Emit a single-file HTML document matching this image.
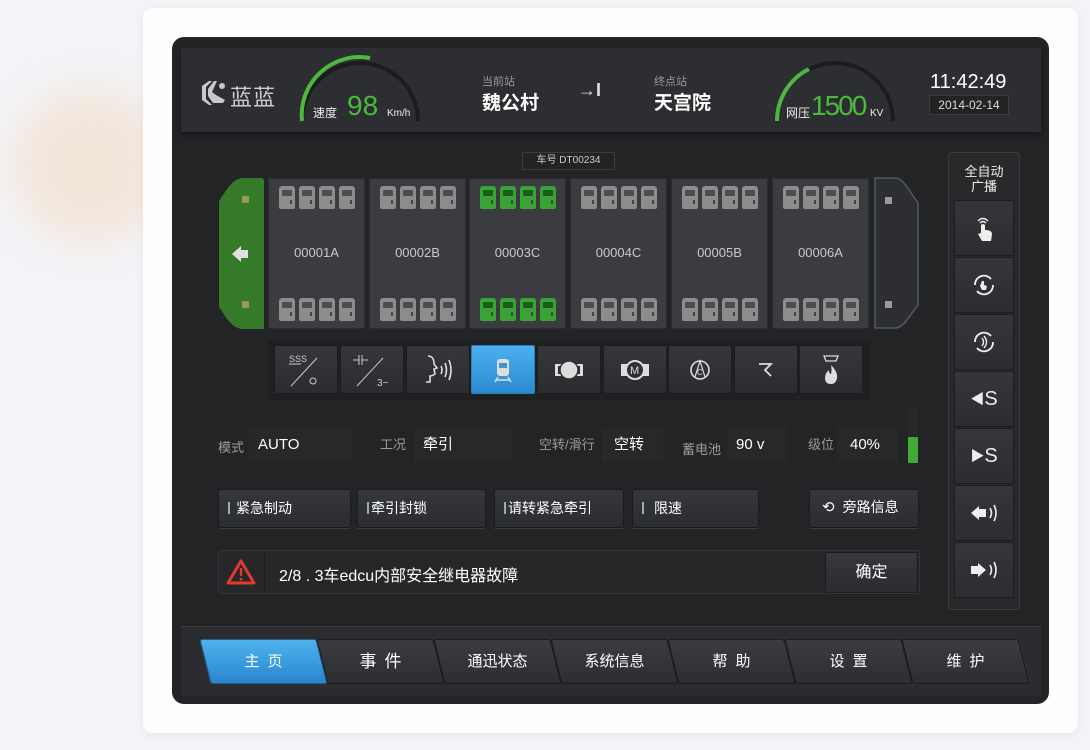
<!DOCTYPE html>
<html><head><meta charset="utf-8"><style>
*{box-sizing:border-box;margin:0;padding:0}
body{width:1090px;height:750px;background:#f3f4f8;position:relative;overflow:hidden;font-family:"Liberation Sans","Noto Sans CJK SC",sans-serif;color:#ddd}
.a{position:absolute}
.glow{left:10px;top:85px;width:160px;height:160px;border-radius:50%;background:#f3e3d4;filter:blur(20px);opacity:.8}
.card{left:143px;top:8px;width:935px;height:725px;background:#fdfdfe;border-radius:10px;box-shadow:0 2px 10px rgba(0,0,0,.05)}
.dev{left:172px;top:37px;width:877px;height:667px;background:#222426;border-radius:12px}
.hdr{left:181px;top:48px;width:860px;height:84px;background:#2c2e31;box-shadow:0 3px 6px rgba(0,0,0,.4)}
.car{width:97px;height:151px;top:178px;background:#3a3c3f;border:1px solid #2a2c2e;border-radius:2px}
.car .id{position:absolute;top:66px;width:100%;text-align:center;font-size:13px;color:#c8c8c8}
.doors{position:absolute;left:10px;display:flex;gap:4px}
.d{width:16px;height:23px;background:#8c8c8c;border-radius:3px 3px 2px 2px;position:relative}
.d:before{content:"";position:absolute;left:3px;top:4px;width:10px;height:6px;background:#4b4d50;border-radius:1px}
.d:after{content:"";position:absolute;right:3px;top:14px;width:2px;height:4px;background:#444}
.g .d{background:#3aa335}
.g .d:before{background:#1f5a1d}
.ib{top:345px;width:64px;height:49px;background:linear-gradient(#35373a,#2a2c2f);border:1px solid #1c1d1f;border-radius:2px;display:flex;align-items:center;justify-content:center;color:#ddd}
.lbl{font-size:13px;color:#9a9a9a;top:437px}
.val{top:428px;height:34px;background:#26282a;font-size:15px;color:#fff;line-height:34px;padding-left:9px}
.btn{top:489px;height:39px;background:linear-gradient(#35373a,#2b2d30);border:1px solid #1a1b1d;border-radius:2px;font-size:14px;color:#fff;line-height:37px;padding-left:9px;box-shadow:0 1px 0 #3a3c3f}
.btn i{display:inline-block;width:2px;height:12px;background:#9ab;margin-right:6px;vertical-align:-1px}
.rb{left:954px;width:60px;height:56px;background:linear-gradient(#34363a,#2b2d30);border:1px solid #1c1d1f;display:flex;align-items:center;justify-content:center;color:#eee;font-size:20px}
.tab{top:639px;width:117px;height:45px;transform:skewX(14deg);background:linear-gradient(#3a3c40,#2c2e31);border:1px solid #1b1c1e;border-radius:3px}
.tt{top:639px;width:117px;height:45px;line-height:45px;text-align:center;color:#fff;font-size:15px}
</style></head><body>
<div class="a glow"></div>
<div class="a card"></div>
<div class="a dev"></div>
<div class="a hdr"></div>

<svg class="a" style="left:199px;top:80px" width="30" height="26" viewBox="0 0 30 26"><path d="M10 1 L3 6 L3 20 L10 25 L13 25 L7 19 L7 7 L13 1Z" fill="#c8c8c8"/><path d="M15 1 L9 9 L9 16 L14 23 L24 23 L26 20 L17 15 L13 12 L18 1Z" fill="#c8c8c8"/><circle cx="23" cy="6" r="3" fill="#c8c8c8"/></svg>
<div class="a" style="left:230px;top:80px;font-size:22px;color:#ccc;letter-spacing:1px">蓝蓝</div>

<svg class="a" style="left:295px;top:52px" width="130" height="72" viewBox="0 0 130 72"><path d="M7 69 A58 58 0 0 1 123 69" fill="none" stroke="#1b1c1e" stroke-width="4"/><path d="M7 69 A58 58 0 0 1 75 6" fill="none" stroke="#4cb840" stroke-width="4"/></svg>
<div class="a" style="left:313px;top:104px;font-size:12px;color:#eee">速度</div>
<div class="a" style="left:347px;top:90px;font-size:28px;color:#4cb840">98</div>
<div class="a" style="left:387px;top:108px;font-size:10px;color:#eee">Km/h</div>

<div class="a" style="left:482px;top:73px;font-size:11px;color:#999">当前站</div>
<div class="a" style="left:482px;top:88px;font-size:19px;color:#fff;font-weight:bold">魏公村</div>
<div class="a" style="left:578px;top:80px;font-size:18px;color:#ddd;font-weight:bold">→I</div>
<div class="a" style="left:654px;top:73px;font-size:11px;color:#999">终点站</div>
<div class="a" style="left:654px;top:88px;font-size:19px;color:#fff;font-weight:bold">天宫院</div>

<svg class="a" style="left:772px;top:52px" width="125" height="72" viewBox="0 0 125 72"><path d="M5 69 A58 58 0 0 1 121 69" fill="none" stroke="#1b1c1e" stroke-width="4"/><path d="M5 69 A58 58 0 0 1 37 17" fill="none" stroke="#4cb840" stroke-width="4"/></svg>
<div class="a" style="left:786px;top:104px;font-size:12px;color:#eee">网压</div>
<div class="a" style="left:811px;top:90px;font-size:28px;color:#4cb840;letter-spacing:-2px">1500</div>
<div class="a" style="left:870px;top:108px;font-size:10px;color:#eee">KV</div>

<div class="a" style="left:930px;top:71px;font-size:20px;color:#fff">11:42:49</div>
<div class="a" style="left:929px;top:95px;width:80px;height:20px;background:#222325;border:1px solid #3a3c3e;font-size:12px;color:#ddd;text-align:center;line-height:18px">2014-02-14</div>

<div class="a" style="left:522px;top:152px;width:93px;height:18px;background:#222325;border:1px solid #3a3c3e;font-size:10px;color:#ccc;text-align:center;line-height:16px">车号 DT00234</div>
<svg class="a" style="left:217px;top:177px" width="48" height="153" viewBox="0 0 48 153"><path d="M26 1 L44 1 Q47 1 47 4 L47 152 L26 152 Q18 152 10 142 L2 130 L2 24 L10 12 Q18 1 26 1Z" fill="#347a28"/><rect x="25" y="19" width="7" height="7" fill="#9a9a50"/><rect x="25" y="124" width="7" height="7" fill="#9a9a50"/><path d="M15 77 L24 69 L24 73 L31 73 L31 81 L24 81 L24 85Z" fill="#e0e0e0"/></svg>
<svg class="a" style="left:873px;top:177px" width="48" height="153" viewBox="0 0 48 153"><path d="M2 1 L22 1 Q28 1 34 10 L45 26 L45 128 L34 143 Q28 151 22 151 L2 151Z" fill="#2c2e31" stroke="#55585c" stroke-width="1.5"/><rect x="12" y="20" width="7" height="7" fill="#9a9a9a"/><rect x="12" y="124" width="7" height="7" fill="#9a9a9a"/></svg>

<div class="a car" style="left:268px"><div class="doors" style="top:7px"><div class="d"></div><div class="d"></div><div class="d"></div><div class="d"></div></div><div class="id">00001A</div><div class="doors" style="top:119px"><div class="d"></div><div class="d"></div><div class="d"></div><div class="d"></div></div></div>
<div class="a car" style="left:369px"><div class="doors" style="top:7px"><div class="d"></div><div class="d"></div><div class="d"></div><div class="d"></div></div><div class="id">00002B</div><div class="doors" style="top:119px"><div class="d"></div><div class="d"></div><div class="d"></div><div class="d"></div></div></div>
<div class="a car g" style="left:469px"><div class="doors" style="top:7px"><div class="d"></div><div class="d"></div><div class="d"></div><div class="d"></div></div><div class="id">00003C</div><div class="doors" style="top:119px"><div class="d"></div><div class="d"></div><div class="d"></div><div class="d"></div></div></div>
<div class="a car" style="left:570px"><div class="doors" style="top:7px"><div class="d"></div><div class="d"></div><div class="d"></div><div class="d"></div></div><div class="id">00004C</div><div class="doors" style="top:119px"><div class="d"></div><div class="d"></div><div class="d"></div><div class="d"></div></div></div>
<div class="a car" style="left:671px"><div class="doors" style="top:7px"><div class="d"></div><div class="d"></div><div class="d"></div><div class="d"></div></div><div class="id">00005B</div><div class="doors" style="top:119px"><div class="d"></div><div class="d"></div><div class="d"></div><div class="d"></div></div></div>
<div class="a car" style="left:772px"><div class="doors" style="top:7px"><div class="d"></div><div class="d"></div><div class="d"></div><div class="d"></div></div><div class="id">00006A</div><div class="doors" style="top:119px"><div class="d"></div><div class="d"></div><div class="d"></div><div class="d"></div></div></div>

<div class="a" style="left:268px;top:340px;width:602px;height:60px;background:#1e2022;border-radius:3px"></div>
<div class="a ib" style="left:274px"><svg width="50" height="40" viewBox="0 0 50 40"><text x="8" y="12" font-size="9" fill="#ccc" font-family="Liberation Sans">SSS</text><line x1="8" y1="14" x2="20" y2="14" stroke="#ccc"/><line x1="10" y1="36" x2="36" y2="8" stroke="#ccc"/><circle cx="32" cy="31" r="3" fill="none" stroke="#ccc"/></svg></div>
<div class="a ib" style="left:340px"><svg width="50" height="40" viewBox="0 0 50 40"><path d="M6 10 H12 M12 5 V15 M15 5 V15 M15 10 H21" stroke="#ccc"/><line x1="10" y1="36" x2="36" y2="8" stroke="#ccc"/><text x="30" y="36" font-size="10" fill="#ccc" font-family="Liberation Sans">3~</text></svg></div>
<div class="a ib" style="left:406px"><svg width="40" height="36" viewBox="0 0 40 36"><path d="M10 4 Q16 4 16 12 L19 16 L16 17 L17 22 Q14 24 12 24 L12 30 L8 30" fill="none" stroke="#ddd" stroke-width="1.6"/><path d="M23 14 Q25 18 23 22 M27 11 Q30 18 27 25 M31 8 Q35 18 31 28" fill="none" stroke="#ddd" stroke-width="1.6"/></svg></div>
<div class="a ib" style="left:471px;background:linear-gradient(#4db0ee,#2a8ad0);border-color:#2a7fbf"><svg width="24" height="28" viewBox="0 0 24 28"><rect x="6" y="3" width="12" height="17" rx="3" fill="#ddd"/><rect x="8" y="7" width="8" height="5" fill="#3a95d8"/><path d="M7 21 L4 26 M17 21 L20 26 M5 24 H19" stroke="#ddd" stroke-width="1.5"/></svg></div>
<div class="a ib" style="left:537px"><svg width="40" height="30" viewBox="0 0 40 30"><rect x="6" y="9" width="28" height="12" fill="#ddd"/><circle cx="20" cy="15" r="9" fill="#ddd" stroke="#2e3033" stroke-width="1.5"/><rect x="9" y="11" width="2" height="8" fill="#2e3033"/><rect x="29" y="11" width="2" height="8" fill="#2e3033"/></svg></div>
<div class="a ib" style="left:603px"><svg width="40" height="30" viewBox="0 0 40 30"><rect x="6" y="9" width="28" height="12" fill="#ddd"/><circle cx="20" cy="15" r="9" fill="#2e3033" stroke="#ddd" stroke-width="2"/><text x="15" y="19" font-size="11" fill="#ddd" font-family="Liberation Sans">M</text></svg></div>
<div class="a ib" style="left:668px"><svg width="30" height="30" viewBox="0 0 30 30"><circle cx="15" cy="15" r="9" fill="none" stroke="#ddd" stroke-width="1.6"/><path d="M10 22 L15 6 L20 22" fill="none" stroke="#ddd" stroke-width="1.2"/><text x="12" y="20" font-size="8" fill="#ddd" font-family="Liberation Sans">C</text></svg></div>
<div class="a ib" style="left:734px"><svg width="30" height="30" viewBox="0 0 30 30"><path d="M8 9 L20 9 L14 15 L20 21" fill="none" stroke="#ddd" stroke-width="1.8"/></svg></div>
<div class="a ib" style="left:799px"><svg width="30" height="36" viewBox="0 0 30 36"><path d="M8 4 H22 L20 9 H10Z" fill="none" stroke="#ddd" stroke-width="1.3"/><path d="M15 13 Q22 20 21 26 Q20 32 15 32 Q9 32 9 26 Q9 21 13 18 Q13 22 15 22 Q16 18 15 13Z" fill="#ddd"/></svg></div>

<div class="a lbl" style="left:218px">模式</div>
<div class="a val" style="left:249px;width:103px">AUTO</div>
<div class="a lbl" style="left:380px;top:434px">工况</div>
<div class="a val" style="left:414px;width:98px">牵引</div>
<div class="a lbl" style="left:539px;top:434px">空转/滑行</div>
<div class="a val" style="left:602px;width:61px;padding-left:12px">空转</div>
<div class="a lbl" style="left:682px;top:439px">蓄电池</div>
<div class="a val" style="left:727px;width:60px">90 v</div>
<div class="a lbl" style="left:808px;top:434px">级位</div>
<div class="a val" style="left:837px;width:61px;padding-left:13px">40%</div>
<div class="a" style="left:908px;top:408px;width:10px;height:55px;background:#26282a"></div>
<div class="a" style="left:908px;top:437px;width:10px;height:26px;background:#43a838"></div>

<div class="a btn" style="left:218px;width:133px"><i></i>紧急制动</div>
<div class="a btn" style="left:357px;width:129px"><i style="margin-right:2px"></i>牵引封锁</div>
<div class="a btn" style="left:494px;width:130px"><i style="margin-right:2px"></i>请转紧急牵引</div>
<div class="a btn" style="left:632px;width:127px"><i style="margin-right:10px"></i>限速</div>
<div class="a btn" style="left:809px;width:110px;padding-left:12px;line-height:35px"><span style="font-size:15px;margin-right:8px">⟲</span>旁路信息</div>

<div class="a" style="left:218px;top:550px;width:702px;height:44px;background:#262729;border:1px solid #333538;border-radius:3px"></div>
<div class="a" style="left:264px;top:551px;width:1px;height:42px;background:#1c1d1f"></div>
<svg class="a" style="left:226px;top:558px" width="30" height="28" viewBox="0 0 30 28"><path d="M15 3 L28 25 L2 25Z" fill="none" stroke="#e03a30" stroke-width="3" stroke-linejoin="round"/><rect x="13.8" y="10" width="2.4" height="8" fill="#e03a30"/><rect x="13.8" y="20" width="2.4" height="2.4" fill="#e03a30"/></svg>
<div class="a" style="left:279px;top:562px;font-size:16px;color:#fff">2/8 . 3车edcu内部安全继电器故障</div>
<div class="a" style="left:825px;top:552px;width:93px;height:41px;background:linear-gradient(#36383b,#2a2c2f);border:1px solid #1a1b1d;font-size:16px;color:#fff;text-align:center;line-height:40px">确定</div>

<div class="a" style="left:948px;top:152px;width:72px;height:458px;border:1px solid #3a3c3f;border-radius:4px;background:#27292b"></div>
<div class="a" style="left:948px;top:164px;width:72px;text-align:center;font-size:13px;color:#eee;line-height:15px">全自动<br>广播</div>
<div class="a rb" style="top:200px"><svg width="24" height="30" viewBox="0 0 24 30"><path d="M6 8 Q11 3 16 8 M8 10 Q11 7 14 10" fill="none" stroke="#eee" stroke-width="1.4"/><path d="M9 12 Q11 10 13 12 L13 17 Q20 17 20 21 L19 28 L10 28 L6 21 L9 20Z" fill="#eee"/></svg></div>
<div class="a rb" style="top:257px"><svg width="26" height="26" viewBox="0 0 26 26"><path d="M4 13 A9 9 0 0 1 20 7 M22 13 A9 9 0 0 1 6 19" fill="none" stroke="#eee" stroke-width="1.8"/><path d="M11 9 L13 9 L13 13 L16 14 L15 18 L11 18 L9 14Z" fill="#eee"/></svg></div>
<div class="a rb" style="top:314px"><svg width="26" height="26" viewBox="0 0 26 26"><path d="M4 13 A9 9 0 0 1 20 7 M22 13 A9 9 0 0 1 6 19" fill="none" stroke="#eee" stroke-width="1.8"/><path d="M11 9 Q14 13 11 17 M13 7 Q18 13 13 19" fill="none" stroke="#eee" stroke-width="1.4"/></svg></div>
<div class="a rb" style="top:371px"><span style="font-size:14px">◀</span>S</div>
<div class="a rb" style="top:428px"><span style="font-size:14px">▶</span>S</div>
<div class="a rb" style="top:485px"><svg width="32" height="20" viewBox="0 0 32 20"><path d="M3 10 L11 3 L11 6 L18 6 L18 14 L11 14 L11 17Z" fill="#eee"/><path d="M22 5 Q25 10 22 15 M26 2 Q30 10 26 18" fill="none" stroke="#eee" stroke-width="1.6"/></svg></div>
<div class="a rb" style="top:542px"><svg width="32" height="20" viewBox="0 0 32 20"><path d="M18 10 L10 3 L10 6 L3 6 L3 14 L10 14 L10 17Z" fill="#eee"/><path d="M22 5 Q25 10 22 15 M26 2 Q30 10 26 18" fill="none" stroke="#eee" stroke-width="1.6"/></svg></div>

<div class="a" style="left:181px;top:626px;width:860px;height:70px;background:#2a2c2f;border-top:1px solid #3a3c3f"></div>
<div class="a tab" style="left:205px;background:linear-gradient(#4eb2ee,#2a86cc);border-color:#1e5f90"></div>
<div class="a tab" style="left:322px"></div>
<div class="a tab" style="left:439px"></div>
<div class="a tab" style="left:556px"></div>
<div class="a tab" style="left:673px"></div>
<div class="a tab" style="left:790px"></div>
<div class="a tab" style="left:907px"></div>
<div class="a tt" style="left:205px;letter-spacing:8px;padding-left:8px">主页</div>
<div class="a tt" style="left:322px;letter-spacing:8px;padding-left:8px;font-size:17px">事件</div>
<div class="a tt" style="left:439px">通迅状态</div>
<div class="a tt" style="left:556px">系统信息</div>
<div class="a tt" style="left:673px;letter-spacing:8px;padding-left:8px">帮助</div>
<div class="a tt" style="left:790px;letter-spacing:8px;padding-left:8px">设置</div>
<div class="a tt" style="left:907px;letter-spacing:8px;padding-left:8px">维护</div>
</body></html>
